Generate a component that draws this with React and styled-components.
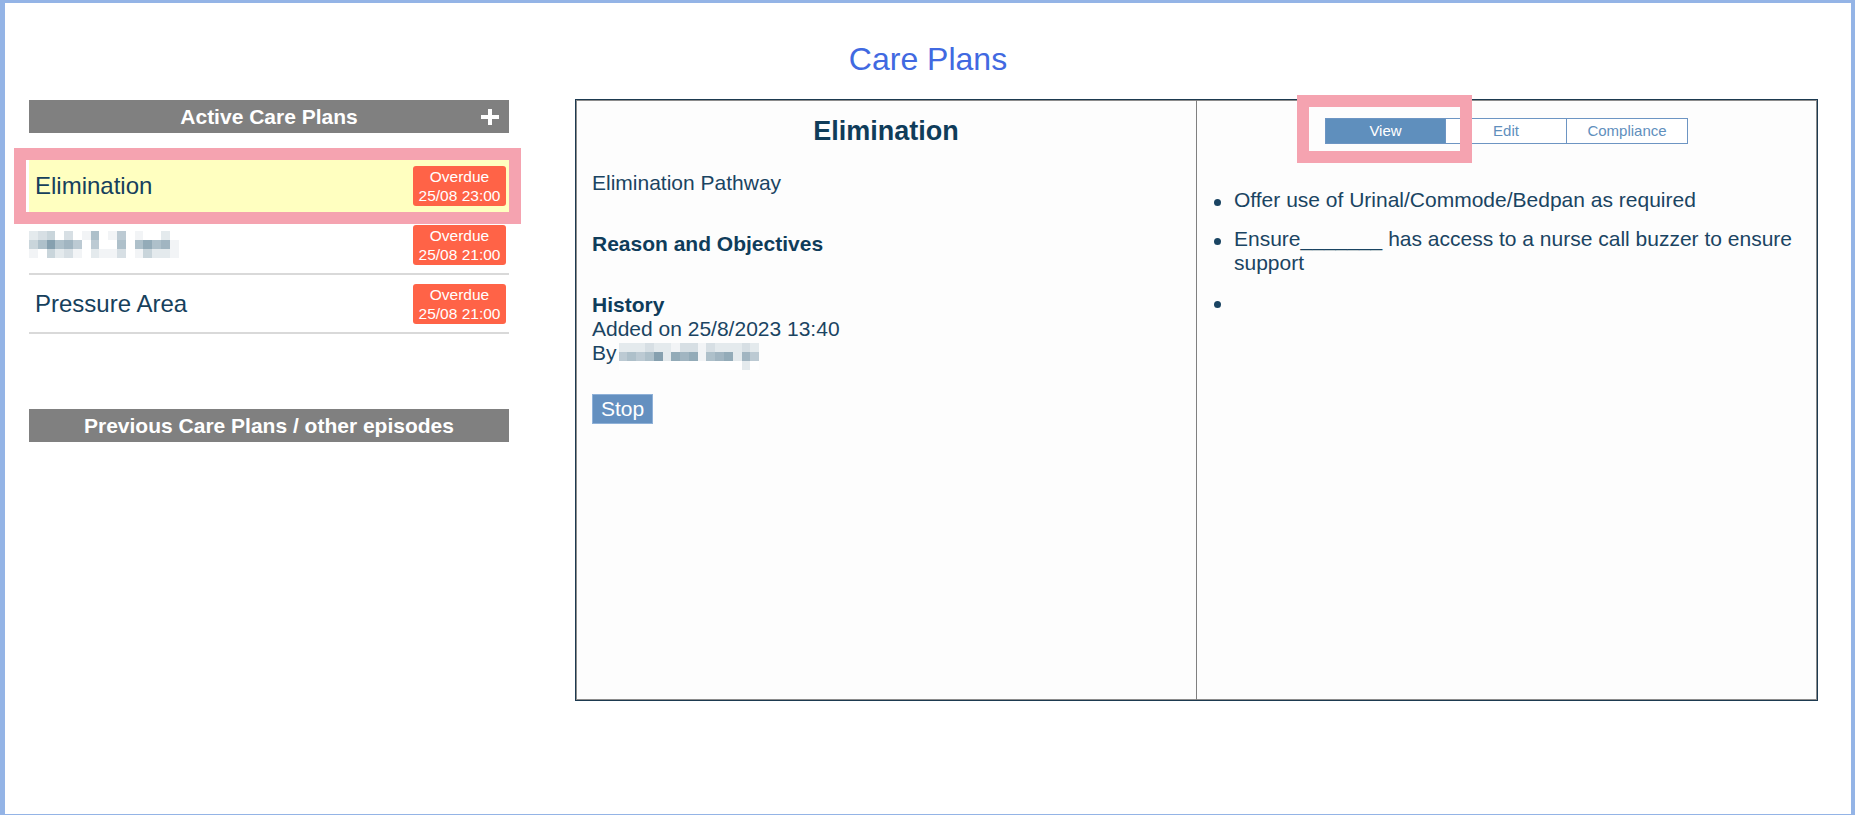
import React from 'react';
import styled, { createGlobalStyle } from 'styled-components';

const GlobalStyle = createGlobalStyle`
  html, body {
    margin: 0;
    padding: 0;
    background: #ffffff;
  }
  body {
    font-family: "Liberation Sans", Arial, sans-serif;
    color: #16405c;
  }
`;

// blurred names, shade levels 0 (white) .. 9 (dark grey-blue)
const nameBlur = [
  [2, 3, 4, 0, 3, 0, 1, 6, 0, 1, 5, 0, 1, 0, 0, 2, 0],
  [4, 6, 9, 6, 7, 5, 0, 5, 0, 0, 6, 0, 6, 8, 6, 7, 1],
  [1, 0, 4, 2, 3, 1, 0, 2, 1, 1, 3, 0, 1, 4, 2, 2, 1],
];

const authorBlur = [
  [2, 2, 2, 3, 2, 2, 1, 3, 3, 1, 3, 2, 2, 2, 3, 2],
  [5, 6, 5, 6, 9, 2, 8, 7, 8, 1, 6, 7, 8, 2, 7, 5],
  [0, 0, 0, 0, 0, 0, 0, 0, 0, 0, 0, 0, 0, 0, 2, 0],
];

const shade = (level) => {
  const t = level / 9;
  const mix = (a, b) => Math.round(a + (b - a) * t);
  return `rgb(${mix(255, 134)}, ${mix(255, 160)}, ${mix(255, 175)})`;
};

const plans = [
  { id: 1, name: 'Elimination', due: '25/08 23:00', selected: true },
  { id: 2, blurred: true, due: '25/08 21:00' },
  { id: 3, name: 'Pressure Area', due: '25/08 21:00' },
];

const steps = [
  'Offer use of Urinal/Commode/Bedpan as required',
  'Ensure_______ has access to a nurse call buzzer to ensure support',
  '',
];

const Pixelated = ({ rows }) => (
  <BlurGrid $cols={rows[0].length}>
    {rows.flat().map((level, i) => (
      <span key={i} style={{ background: shade(level) }} />
    ))}
  </BlurGrid>
);

const PlusIcon = () => (
  <svg width="18" height="16" viewBox="0 0 18 16">
    <rect x="0" y="6" width="18" height="4" fill="#fff" />
    <rect x="7" y="0" width="4" height="16" fill="#fff" />
  </svg>
);

const App = () => {
  return (
    <>
      <GlobalStyle />
      <Window>
        <Title>Care Plans</Title>
        <Content>
          <Sidebar>
            <SectionBar>
              <span />
              <span>Active Care Plans</span>
              <AddButton><PlusIcon /></AddButton>
            </SectionBar>
            <PlanList>
              {plans.map(plan => (
                <PlanRow key={plan.id} $selected={plan.selected}>
                  {plan.blurred ? (
                    <NameBlur><Pixelated rows={nameBlur} /></NameBlur>
                  ) : (
                    <PlanName>{plan.name}</PlanName>
                  )}
                  <DueBadge>
                    <span>Overdue</span>
                    <span>{plan.due}</span>
                  </DueBadge>
                  {plan.selected && <RowHighlight />}
                </PlanRow>
              ))}
            </PlanList>
            <SectionBar $previous>
              <span />
              <span>Previous Care Plans / other episodes</span>
              <span />
            </SectionBar>
          </Sidebar>

          <DetailPanel>
            <Summary>
              <PlanHeading>Elimination</PlanHeading>
              <Line>Elimination Pathway</Line>
              <Label $gap={37}>Reason and Objectives</Label>
              <Label $gap={37}>History</Label>
              <Line>Added on 25/8/2023 13:40</Line>
              <ByLine>
                <span>By</span>
                <AuthorBlur><Pixelated rows={authorBlur} /></AuthorBlur>
              </ByLine>
              <StopButton>Stop</StopButton>
            </Summary>

            <Interventions>
              <TabWrap>
                <Tabs>
                  <Tab $active>View</Tab>
                  <Tab>Edit</Tab>
                  <Tab>Compliance</Tab>
                </Tabs>
                <TabHighlight />
              </TabWrap>
              <StepList>
                {steps.map((step, i) => (
                  <Step key={i}>
                    <Dot />
                    <span>{step}</span>
                  </Step>
                ))}
              </StepList>
            </Interventions>
          </DetailPanel>
        </Content>
      </Window>
    </>
  );
};

export default App;



const Window = styled.div`
  height: 815px;
  box-sizing: border-box;
  border-style: solid;
  border-color: #94b4e6;
  border-width: 3px 4px 1px 5px;
  background: #ffffff;
  overflow: hidden;
`;

const Title = styled.h1`
  margin: 37px 0 0;
  text-align: center;
  font-size: 32px;
  line-height: 38px;
  font-weight: normal;
  color: #4169e1;
`;

const Content = styled.div`
  display: flex;
  align-items: flex-start;
  gap: 66px;
  padding-left: 24px;
  margin-top: 21px;
`;

const Sidebar = styled.div`
  width: 480px;
  margin-top: 1px;
  display: flex;
  flex-direction: column;
`;

const SectionBar = styled.div`
  display: grid;
  grid-template-columns: 1fr auto 1fr;
  align-items: center;
  height: 33px;
  margin-top: ${p => (p.$previous ? '75px' : '0')};
  background: #808080;
  color: #ffffff;
  font-weight: bold;
  font-size: 21px;
  line-height: 33px;
`;

const AddButton = styled.span`
  justify-self: end;
  display: flex;
  padding-right: 10px;
  padding-top: 1px;
  cursor: pointer;
`;

const PlanList = styled.div`
  margin-top: 24px;
  display: flex;
  flex-direction: column;
`;

const PlanRow = styled.div`
  position: relative;
  display: flex;
  align-items: center;
  justify-content: space-between;
  height: 57px;
  padding: 0 3px 0 6px;
  border-bottom: 2px solid #d9d9d9;
  background: ${p => (p.$selected ? '#ffffc0' : 'transparent')};
`;

const PlanName = styled.span`
  font-size: 24px;
  color: #16405c;
`;

const NameBlur = styled.span`
  margin-left: -6px;
  display: flex;
`;

const BlurGrid = styled.span`
  display: inline-grid;
  grid-template-columns: repeat(${p => p.$cols}, 8.8px);
  grid-auto-rows: 9px;
`;

const DueBadge = styled.div`
  width: 93px;
  padding: 1px 0;
  border-radius: 3px;
  background: #ff6347;
  color: #ffffff;
  font-size: 15.5px;
  line-height: 19px;
  text-align: center;
  display: flex;
  flex-direction: column;
`;

const RowHighlight = styled.div`
  position: absolute;
  left: -15px;
  top: -9px;
  width: 507px;
  height: 76px;
  box-sizing: border-box;
  border: 12px solid #f5a3b0;
  pointer-events: none;
`;

const DetailPanel = styled.div`
  width: 1243px;
  height: 602px;
  box-sizing: border-box;
  border: 1px solid #1d3a50;
  box-shadow: inset 0 0 0 1px #8c8c8c;
  background: #fdfdfd;
  display: grid;
  grid-template-columns: 621px 1fr;
`;

const Summary = styled.div`
  border-right: 1px solid #808080;
  padding: 15px 16px 0;
  display: flex;
  flex-direction: column;
  align-items: flex-start;
  font-size: 21px;
  line-height: 24px;
  color: #1a4462;
`;

const PlanHeading = styled.h2`
  align-self: stretch;
  margin: 0 0 24px;
  text-align: center;
  font-size: 27px;
  line-height: 32px;
  font-weight: bold;
  color: #0f3c5a;
`;

const Line = styled.div`
  white-space: nowrap;
`;

const Label = styled.div`
  margin-top: ${p => p.$gap}px;
  font-weight: bold;
  color: #0f3c5a;
`;

const ByLine = styled.div`
  display: flex;
  align-items: flex-start;
  gap: 2px;
`;

const AuthorBlur = styled.span`
  display: flex;
  margin-top: 2px;
`;

const StopButton = styled.button`
  margin-top: 24px;
  height: 30px;
  padding: 0 8px;
  border: 1px solid #8fb1d8;
  background: #6490c0;
  color: #ffffff;
  font-family: "Liberation Sans", Arial, sans-serif;
  font-size: 21px;
  line-height: 28px;
  cursor: pointer;
`;

const Interventions = styled.div`
  display: flex;
  flex-direction: column;
  padding-top: 18px;
`;

const TabWrap = styled.div`
  position: relative;
  align-self: center;
  margin-left: -1px;
`;

const Tabs = styled.div`
  display: flex;
`;

const Tab = styled.div`
  width: 121px;
  height: 26px;
  box-sizing: border-box;
  border: 1px solid #6d95c3;
  border-left-width: ${p => (p.$active ? '1px' : '0')};
  background: ${p => (p.$active ? '#5f8fbd' : '#ffffff')};
  color: ${p => (p.$active ? '#ffffff' : '#5f8fbd')};
  font-size: 15px;
  line-height: 24px;
  text-align: center;
  cursor: pointer;
`;

const TabHighlight = styled.div`
  position: absolute;
  left: -28px;
  top: -23px;
  width: 175px;
  height: 68px;
  box-sizing: border-box;
  border: 12px solid #f5a3b0;
  pointer-events: none;
`;

const StepList = styled.ul`
  list-style: none;
  margin: 44px 0 0;
  padding: 0 0 0 15px;
  font-size: 21px;
  line-height: 24px;
  color: #1a4462;
`;

const Step = styled.li`
  display: grid;
  grid-template-columns: 22px 1fr;
  min-height: 24px;
  margin-bottom: 15px;
`;

const Dot = styled.span`
  width: 7px;
  height: 7px;
  margin: 11px 0 0 1.5px;
  border-radius: 50%;
  background: #1a4462;
`;
